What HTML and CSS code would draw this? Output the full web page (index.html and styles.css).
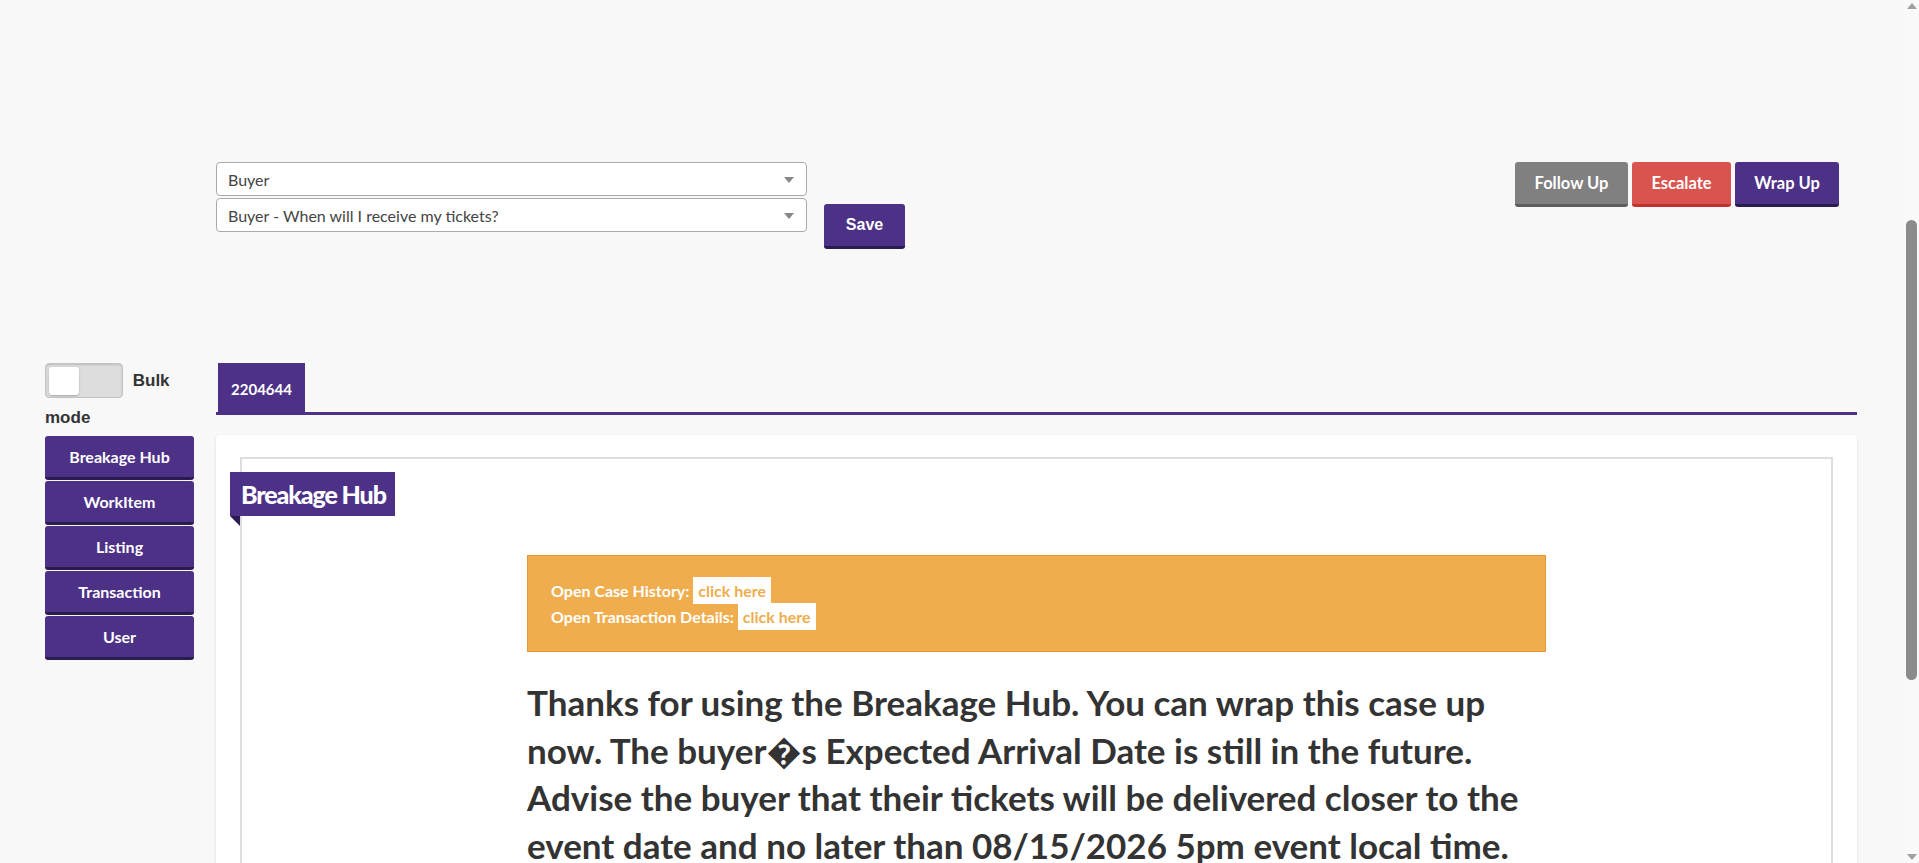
FILE: index.html
```html
<!DOCTYPE html>
<html lang="en">
<head>
<meta charset="utf-8">
<title>Breakage Hub</title>
<link rel="stylesheet" href="styles.css">
</head>
<body>
<div class="page">
  <header class="header">
    <div class="left-group">
      <div class="selects">
        <div class="select"><span>Buyer</span><i class="caret"></i></div>
        <div class="select"><span>Buyer - When will I receive my tickets?</span><i class="caret"></i></div>
      </div>
      <button class="btn btn-save">Save</button>
    </div>
    <div class="right-group">
      <button class="btn btn-action btn-gray">Follow Up</button>
      <button class="btn btn-action btn-red">Escalate</button>
      <button class="btn btn-action btn-purple">Wrap Up</button>
    </div>
  </header>

  <div class="body-row">
    <aside class="sidebar">
      <div class="bulk"><span class="toggle"><span class="knob"></span></span> Bulk mode</div>
      <nav class="side-nav">
        <button class="side-btn">Breakage Hub</button>
        <button class="side-btn">WorkItem</button>
        <button class="side-btn">Listing</button>
        <button class="side-btn">Transaction</button>
        <button class="side-btn">User</button>
      </nav>
    </aside>

    <main class="main">
      <div class="tabs"><div class="tab">2204644</div></div>
      <section class="card">
        <div class="inner">
          <div class="ribbon">Breakage Hub</div>
          <div class="content">
            <div class="alert">
              <div class="alert-line">Open Case History: <span class="link">click here</span></div>
              <div class="alert-line">Open Transaction Details: <span class="link">click here</span></div>
            </div>
            <p class="message">Thanks for using the Breakage Hub. You can wrap this case up now. The buyer&#xFFFD;s Expected Arrival Date is still in the future. Advise the buyer that their tickets will be delivered closer to the event date and no later than 08/15/2026 5pm event local time.</p>
          </div>
        </div>
      </section>
    </main>
  </div>
</div>
<div class="scrollbar" aria-hidden="true">
  <span class="sb-arrow sb-up"></span>
  <span class="sb-thumb"></span>
  <span class="sb-arrow sb-down"></span>
</div>
</body>
</html>
```

FILE: styles.css
```css
* { box-sizing: border-box; }

html, body {
  margin: 0;
  background: #f8f8f8;
  font-family: Lato, "Open Sans", Arial, sans-serif;
  color: #333;
}

.page {
  padding-left: 45px;
  padding-bottom: 120px;
}

.header {
  margin-left: 171px;
  width: 1641px;
  padding-top: 162px;
  padding-right: 18px;
  display: flex;
  justify-content: space-between;
  align-items: flex-start;
}

.left-group {
  display: flex;
  align-items: flex-start;
}

.selects {
  width: 591px;
  display: flex;
  flex-direction: column;
  gap: 2px;
}

.select {
  height: 34px;
  background: #fff;
  border: 1px solid #aaa;
  border-radius: 4px;
  padding: 0 12px 0 11px;
  display: flex;
  align-items: center;
  justify-content: space-between;
  font-size: 16px;
  color: #444;
}

.caret {
  width: 0;
  height: 0;
  border-left: 5px solid transparent;
  border-right: 5px solid transparent;
  border-top: 6px solid #888;
  margin-top: 1px;
}

.btn {
  border: none;
  color: #fff;
  font-weight: 700;
  border-radius: 3px;
  cursor: pointer;
  padding: 0;
}

.btn-save {
  margin-left: 17px;
  margin-top: 42px;
  width: 81px;
  height: 45px;
  background: #4c3187;
  border-bottom: 3px solid #2b1c50;
  font-family: "Liberation Sans", Arial, sans-serif;
  font-size: 16px;
}

.right-group {
  display: flex;
  gap: 4px;
}

.btn-action {
  height: 45px;
  font-family: Lato, sans-serif;
  font-size: 16.5px;
}

.btn-gray { width: 113px; background: #808080; border-bottom: 3px solid #5e5e5e; }
.btn-red { width: 99px; background: #d9534f; border-bottom: 3px solid #c2332e; }
.btn-purple { width: 104px; background: #4c3187; border-bottom: 3px solid #2b1c50; }

.body-row {
  margin-top: 114px;
  display: flex;
  gap: 22px;
}

.sidebar {
  width: 149px;
  flex: none;
}

.bulk {
  font-family: "Liberation Sans", Arial, sans-serif;
  font-weight: 700;
  font-size: 17px;
  line-height: 30px;
  color: #333;
}

.toggle {
  display: inline-block;
  vertical-align: -17px;
  width: 78px;
  height: 35px;
  margin-bottom: 5px;
  background: #ddd;
  border: 1px solid #c4c4c4;
  border-radius: 4px;
  padding: 3px;
  margin-right: 5px;
  box-shadow: inset 0 1px 2px rgba(0,0,0,0.15);
}

.knob {
  display: block;
  width: 30px;
  height: 28px;
  background: #fff;
  border-radius: 3px;
  box-shadow: 0 1px 2px rgba(0,0,0,0.25);
}

.side-nav {
  margin-top: 3px;
  display: flex;
  flex-direction: column;
  gap: 1px;
}

.side-btn {
  height: 44px;
  width: 149px;
  border: none;
  border-bottom: 3px solid #2b1c50;
  border-radius: 3px;
  background: #4c3187;
  color: #fff;
  font-family: Lato, sans-serif;
  font-weight: 700;
  font-size: 16px;
  padding: 0;
}

.main {
  width: 1641px;
  flex: none;
}

.tabs {
  border-bottom: 3px solid #4c3187;
  padding-left: 2px;
  display: flex;
}

.tab {
  width: 87px;
  height: 49px;
  background: #4c3187;
  color: #fff;
  font-weight: 700;
  font-size: 15px;
  display: flex;
  align-items: center;
  justify-content: center;
  padding-top: 3px;
}

.card {
  margin-top: 20px;
  background: #fff;
  border-radius: 4px;
  box-shadow: 0 1px 3px rgba(0,0,0,0.12);
  padding: 22px 24px 0;
}

.inner {
  position: relative;
  border: 2px solid #ddd;
  border-bottom: none;
  padding: 0 0 40px;
}

.ribbon {
  position: absolute;
  left: -12px;
  top: 13px;
  width: 165px;
  height: 44px;
  background: #4c3187;
  color: #fff;
  font-weight: 900;
  font-size: 25px;
  letter-spacing: -1.1px;
  padding-left: 11px;
  line-height: 44px;
}

.ribbon::after {
  content: "";
  position: absolute;
  left: 0;
  top: 44px;
  border-top: 10px solid #2b1c50;
  border-left: 10px solid transparent;
}

.content {
  width: 1019px;
  margin: 0 auto;
  padding-top: 96px;
}

.alert {
  background: #f0ad4e;
  border: 1px solid #e09a3a;
  padding: 21px 23px 22px;
  color: #fff;
  font-weight: 700;
  font-size: 16px;
}

.alert-line {
  height: 26px;
  line-height: 26px;
}

.link {
  display: inline-block;
  background: #fff;
  color: #f0ad4e;
  padding: 0 5px;
  line-height: 27px;
  font-size: 16px;
}

.message {
  margin: 27px 0 0;
  font-weight: 700;
  font-size: 35px;
  line-height: 47.5px;
  color: #333;
}

.scrollbar {
  position: fixed;
  top: 0;
  right: 0;
  bottom: 0;
  width: 15px;
  background: #f9f9f9;
}

.sb-thumb {
  position: absolute;
  left: 2px;
  width: 11px;
  top: 220px;
  height: 460px;
  background: #8b8b8b;
  border-radius: 6px;
}

.sb-arrow {
  position: absolute;
  left: 3px;
  width: 0;
  height: 0;
  border-left: 5px solid transparent;
  border-right: 5px solid transparent;
}

.sb-up {
  top: 3px;
  border-bottom: 6px solid #a0a0a0;
}

.sb-down {
  bottom: 3px;
  border-top: 6px solid #a0a0a0;
}
```
